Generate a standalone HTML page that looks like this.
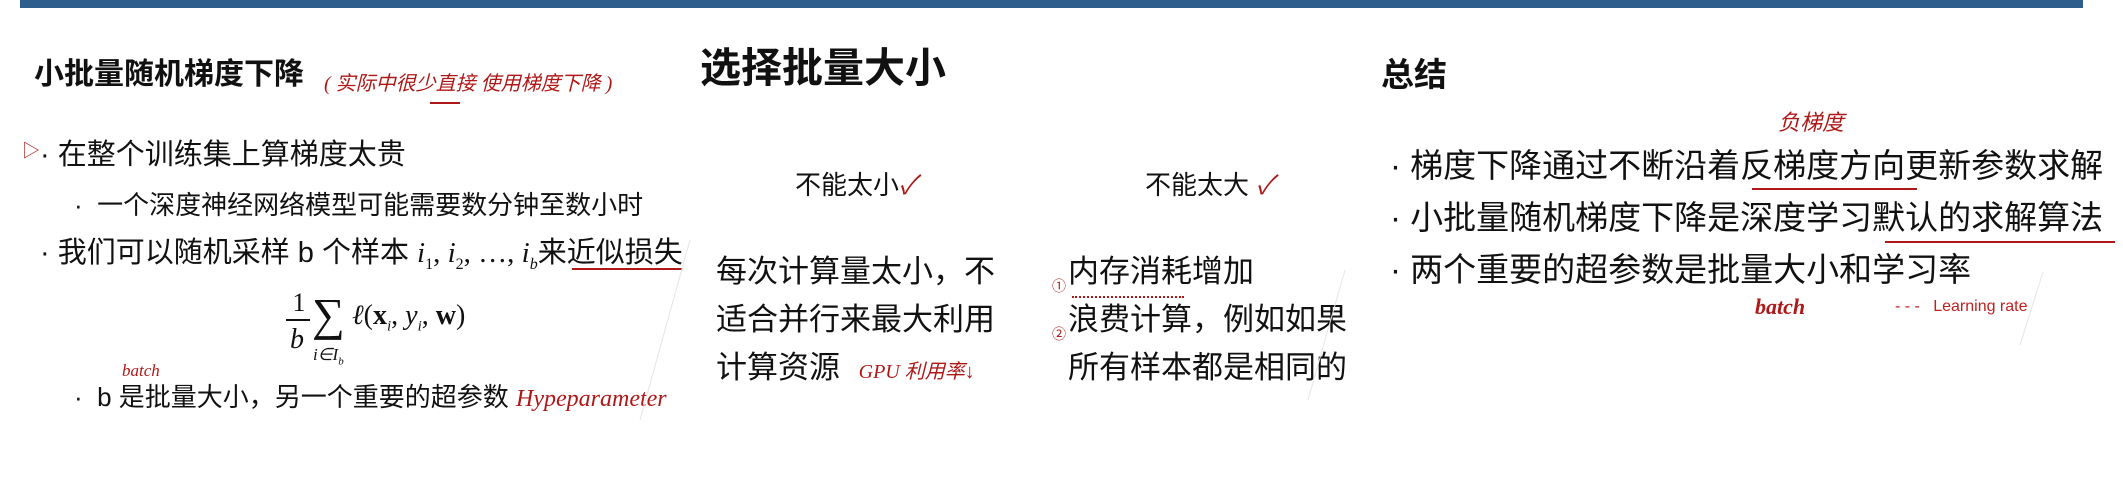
<!DOCTYPE html>
<html><head><meta charset="utf-8"><style>
body{margin:0;width:2123px;height:503px;background:#fff;position:relative;overflow:hidden;font-family:"Liberation Sans","Noto Sans CJK SC",sans-serif;color:#111}
.a{position:absolute;white-space:nowrap;line-height:1}
.b{font-weight:bold}
.r{color:#b01818;font-family:"Liberation Serif","Noto Sans CJK SC",serif;font-style:italic}
.m{font-family:"Liberation Serif",serif}
.u{position:absolute;border-bottom:2px solid #b01818}
</style></head><body>
<div style="position:absolute;left:20px;top:0;width:2063px;height:8px;background:#2e5f8c"></div>

<div class="a b" style="left:34px;top:60px;font-size:30px">小批量随机梯度下降</div>
<div class="a r" style="left:324px;top:74px;font-size:20px">( 实际中很少直接 使用梯度下降 )</div>
<div class="u" style="left:430px;top:102px;width:30px"></div>

<div class="a r" style="left:22px;top:142px;font-size:18px;font-style:normal">▷</div>
<div class="a" style="left:40px;top:141px;font-size:29px">· 在整个训练集上算梯度太贵</div>
<div class="a" style="left:74px;top:192px;font-size:26px">·&nbsp; 一个深度神经网络模型可能需要数分钟至数小时</div>
<div class="a" style="left:40px;top:239px;font-size:29px">· 我们可以随机采样 b 个样本 <span class="m" style="font-style:italic">i</span><sub class="m" style="font-size:16px">1</sub><span class="m">, </span><span class="m" style="font-style:italic">i</span><sub class="m" style="font-size:16px">2</sub><span class="m">, …, </span><span class="m" style="font-style:italic">i</span><sub class="m" style="font-size:16px;font-style:italic">b</sub>来近似损失</div>
<div class="u" style="left:572px;top:268px;width:110px"></div>

<div class="a m" style="left:288px;top:290px;font-size:26px;text-align:center;width:22px">1</div>
<div style="position:absolute;left:286px;top:319px;width:24px;height:2px;background:#111"></div>
<div class="a m" style="left:290px;top:326px;font-size:28px;font-style:italic">b</div>
<div class="a m" style="left:312px;top:292px;font-size:46px">∑</div>
<div class="a m" style="left:313px;top:346px;font-size:17px;font-style:italic">i∈I<sub style="font-size:11px">b</sub></div>
<div class="a m" style="left:352px;top:302px;font-size:28px"><i>ℓ</i>(<b>x</b><sub style="font-size:15px"><i>i</i></sub>, <i>y</i><sub style="font-size:15px"><i>i</i></sub>, <b>w</b>)</div>

<div class="a r" style="left:122px;top:362px;font-size:17px">batch</div>
<div class="a" style="left:74px;top:384px;font-size:26px">·&nbsp; b 是批量大小，另一个重要的超参数 <span class="r" style="font-size:24px">Hypeparameter</span></div>

<div class="a b" style="left:700px;top:48px;font-size:41px">选择批量大小</div>
<div class="a" style="left:795px;top:172px;font-size:26px">不能太小<span class="r">✓</span></div>
<div class="a" style="left:1145px;top:172px;font-size:26px">不能太大 <span class="r">✓</span></div>

<div class="a" style="left:716px;top:248px;font-size:31px;line-height:48px">每次计算量太小，不<br>适合并行来最大利用<br>计算资源 <span class="r" style="font-size:20px">&nbsp;&nbsp;GPU 利用率↓</span></div>
<div class="a r" style="left:1052px;top:264px;font-size:14px;font-style:normal;line-height:48px">①<br>②</div>
<div class="a" style="left:1068px;top:248px;font-size:31px;line-height:48px">内存消耗增加<br>浪费计算，例如如果<br>所有样本都是相同的</div>
<div style="position:absolute;left:1072px;top:292px;width:112px;height:4px;border-bottom:2px dotted #b01818"></div>

<div class="a b" style="left:1381px;top:58px;font-size:33px">总结</div>
<div class="a r" style="left:1778px;top:112px;font-size:22px">负梯度</div>
<div class="a" style="left:1390px;top:140px;font-size:33px;line-height:52px">· 梯度下降通过不断沿着反梯度方向更新参数求解<br>· 小批量随机梯度下降是深度学习默认的求解算法<br>· 两个重要的超参数是批量大小和学习率</div>
<div class="u" style="left:1752px;top:188px;width:165px"></div>
<div class="u" style="left:1885px;top:241px;width:230px"></div>
<div class="a r" style="left:1755px;top:296px;font-size:22px;font-weight:bold">batch</div>
<div class="a" style="left:1895px;top:299px;font-size:16px;color:#c02020">- - - &nbsp; Learning rate</div>

<svg style="position:absolute;left:0;top:0" width="2123" height="503"><g stroke="#e6e6e6" stroke-width="1"><line x1="690" y1="240" x2="640" y2="420"/><line x1="1345" y1="270" x2="1308" y2="400"/><line x1="2043" y1="272" x2="2020" y2="345"/></g></svg>
</body></html>
